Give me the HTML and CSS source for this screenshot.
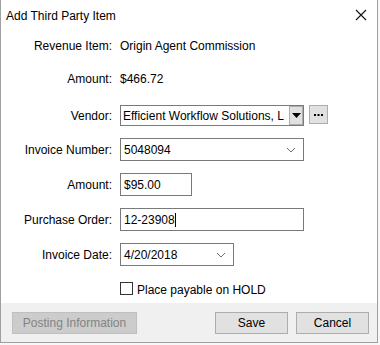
FILE: index.html
```html
<!DOCTYPE html>
<html lang="en">
<head>
  <meta charset="UTF-8" />
  <title>Add Third Party Item</title>
  <link rel="stylesheet" href="styles.css">
</head>
<body>
  <div class="dialog">
    <!-- TITLE BAR -->
    <div class="titlebar">
      <span class="title">Add Third Party Item</span>
      <svg class="close" width="12" height="12" viewBox="0 0 12 12">
        <path d="M1 1 L11 11 M11 1 L1 11" stroke="#111" stroke-width="1.1" fill="none"/>
      </svg>
    </div>

    <!-- FORM -->
    <div class="form">
      <div class="row row-first">
        <label class="lbl">Revenue Item:</label>
        <span class="val">Origin Agent Commission</span>
      </div>
      <div class="row row-tight">
        <label class="lbl">Amount:</label>
        <span class="val">$466.72</span>
      </div>
      <div class="row row-loose">
        <label class="lbl">Vendor:</label>
        <div class="combo vendor">
          <span class="combo-text">Efficient Workflow Solutions, L</span>
          <span class="drop-btn">
            <svg width="9" height="6" viewBox="0 0 9 6"><path d="M0 0 H9 L4.5 5 Z" fill="#000"/></svg>
          </span>
        </div>
        <button class="btn-more">
          <svg width="9" height="3" viewBox="0 0 9 3"><path d="M0 0h2v2H0z M3.5 0h2v2h-2z M7 0h2v2H7z" fill="#000"/></svg>
        </button>
      </div>
      <div class="row row-inv">
        <label class="lbl">Invoice Number:</label>
        <div class="input wide">
          <span>5048094</span>
          <svg class="chev" width="10" height="6" viewBox="0 0 10 6"><path d="M1 1 L5 5 L9 1" stroke="#6d6d6d" fill="none"/></svg>
        </div>
      </div>
      <div class="row">
        <label class="lbl">Amount:</label>
        <div class="input short"><span>$95.00</span></div>
      </div>
      <div class="row">
        <label class="lbl">Purchase Order:</label>
        <div class="input wide"><span>12-23908<i class="caret"></i></span></div>
      </div>
      <div class="row">
        <label class="lbl">Invoice Date:</label>
        <div class="input date">
          <span>4/20/2018</span>
          <svg class="chev" width="10" height="6" viewBox="0 0 10 6"><path d="M1 1 L5 5 L9 1" stroke="#6d6d6d" fill="none"/></svg>
        </div>
      </div>
      <div class="row row-check">
        <span class="lbl"></span>
        <span class="checkbox"></span>
        <span class="check-text">Place payable on HOLD</span>
      </div>
    </div>

    <!-- FOOTER -->
    <div class="footer">
      <button class="btn disabled">Posting Information</button>
      <div class="footer-right">
        <button class="btn">Save</button>
        <button class="btn">Cancel</button>
      </div>
    </div>
  </div>
</body>
</html>
```

FILE: styles.css
```css
/* BASE */
* { margin:0; padding:0; box-sizing:border-box; }
html, body { height:100%; background:#f7f7f7; }
body { font-family:'Liberation Sans', Arial, sans-serif; font-size:12px; color:#000; }

/* WINDOW */
.dialog {
  width:378px; height:343px;
  background:#fff;
  border:1px solid #a0a0a0; border-top:none;
  display:flex; flex-direction:column;
}
.titlebar {
  height:30px; display:flex; align-items:center; justify-content:space-between;
  padding:0 10px 0 5px;
}
.title { font-size:12px; padding-top:1px; }

/* FORM ROWS */
.form { flex:1; display:flex; flex-direction:column; }
.row { height:23px; margin-top:12px; display:flex; align-items:center; }
.row-first { margin-top:4px; }
.row-tight { margin-top:10px; }
.row-loose { margin-top:14px; }
.row-inv { margin-top:11px; }
.row-check { margin-top:12px; }
.lbl { width:111px; text-align:right; margin-right:7px; flex-shrink:0; }
.val { padding-left:1px; }

/* INPUTS */
.input {
  height:23px; border:1px solid #7a7a7a; background:#fff;
  display:flex; align-items:center; justify-content:space-between;
  padding:0 7px 0 3px; margin-left:1px;
}
.wide { width:184px; }
.short { width:72px; }
.date { width:114px; }
.chev { margin-top:1px; }
.caret { display:inline-block; width:1px; height:14px; background:#000; vertical-align:-3px; }

/* VENDOR COMBO */
.combo {
  height:21px; width:184px; margin-left:1px;
  border:1px solid #7a7a7a; background:#fff;
  display:flex; align-items:center; padding-left:2px; overflow:hidden;
}
.combo-text { flex:1; white-space:nowrap; }
.drop-btn {
  width:14px; height:19px; background:#e1e1e1;
  border:1px solid #adadad; display:flex; align-items:center; justify-content:center;
  flex-shrink:0;
}
.btn-more {
  width:19px; height:19px; margin-left:5px; margin-top:-2px;
  background:#e1e1e1; border:1px solid #adadad;
  display:flex; align-items:center; justify-content:center; padding-top:2px;
}

/* CHECKBOX */
.checkbox {
  width:13px; height:13px; border:1px solid #333; margin-left:1px; margin-right:4px; margin-top:-2px;
}

/* FOOTER */
.footer {
  height:39px; background:#f0f0f0;
  display:flex; align-items:center; justify-content:space-between;
  padding:0 8px 0 11px;
}
.footer-right { display:flex; gap:8px; }
.btn {
  height:22px; width:73px; background:#e1e1e1; border:1px solid #adadad;
  font-family:inherit; font-size:12px; color:#000;
}
.btn.disabled { width:125px; background:#cccccc; border-color:#bfbfbf; color:#838383; }
```
